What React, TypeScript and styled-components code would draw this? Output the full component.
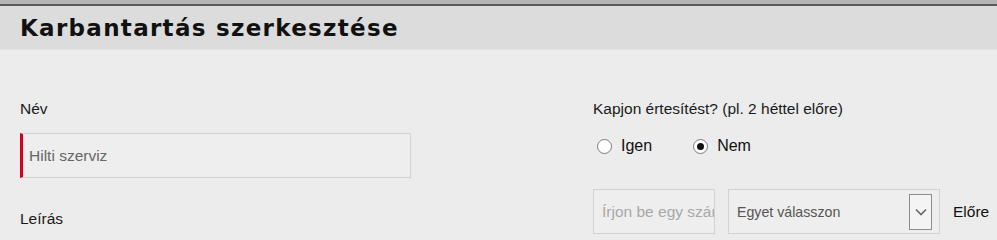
import React, { useState } from "react";
import styled, { createGlobalStyle } from "styled-components";

const fontStack = `"Liberation Sans", Arial, sans-serif`;

const GlobalStyle = createGlobalStyle`
  html, body {
    margin: 0;
    padding: 0;
    background: #ececec;
    font-family: ${fontStack};
  }
`;

const Page = styled.div`
  border-top: 4px solid #b4b4b4;
  min-height: 230px;
  background: #ececec;
`;

const Header = styled.header`
  border-top: 2px solid #5a5a5a;
  border-bottom: 1px solid #e4e4e4;
  background: #dcdcdc;
  height: 43px;
  display: flex;
  align-items: center;
  padding: 0 20px;
`;

const Title = styled.h1`
  margin: 0;
  font-family: "DejaVu Sans", ${fontStack};
  font-size: 23px;
  font-weight: 700;
  letter-spacing: 1.3px;
  color: #111;
`;

const Body = styled.div`
  display: grid;
  grid-template-columns: 553px 1fr;
  column-gap: 20px;
  padding: 50px 20px 0;
`;

const Column = styled.div`
  display: flex;
  flex-direction: column;
`;

const Label = styled.label<{ $top?: number; $gap?: number }>`
  font-size: 15.5px;
  color: #1a1a1a;
  line-height: 18px;
  margin-top: ${(p) => p.$top ?? 0}px;
  margin-bottom: ${(p) => p.$gap ?? 0}px;
`;

const TextInput = styled.input<{ $required?: boolean; $width: number }>`
  box-sizing: border-box;
  width: ${(p) => p.$width}px;
  height: 45px;
  border: 1px solid #d2d2d2;
  border-left: ${(p) => (p.$required ? "3px solid #d7001c" : "1px solid #d2d2d2")};
  background: #eeeeee;
  padding: 0 0 0 ${(p) => (p.$required ? 6 : 8)}px;
  font-family: ${fontStack};
  font-size: 15.5px;
  color: #666;
  outline: none;
  &::placeholder {
    color: #a8a8a8;
  }
`;

const RadioRow = styled.div`
  display: flex;
  gap: 41px;
  margin: 19px 0 0 4px;
`;

const RadioOption = styled.label`
  display: flex;
  align-items: center;
  gap: 9px;
  font-size: 16px;
  line-height: 18px;
  color: #111;
  cursor: pointer;
`;

const RadioDot = styled.span<{ $checked: boolean }>`
  box-sizing: border-box;
  width: 15px;
  height: 15px;
  border-radius: 50%;
  border: 1px solid #7a7a7a;
  background: #fff;
  display: flex;
  align-items: center;
  justify-content: center;
  &::after {
    content: "";
    width: 7px;
    height: 7px;
    border-radius: 50%;
    background: ${(p) => (p.$checked ? "#111" : "transparent")};
  }
`;

const InlineRow = styled.div`
  display: flex;
  align-items: center;
  gap: 13px;
  margin-top: 34px;
`;

const Select = styled.div`
  box-sizing: border-box;
  width: 212px;
  height: 45px;
  border: 1px solid #d2d2d2;
  background: #eeeeee;
  display: flex;
  align-items: center;
  justify-content: space-between;
  padding: 0 7px 0 8px;
  font-size: 14.2px;
  color: #555;
`;

const ChevronBox = styled.span`
  box-sizing: border-box;
  width: 23px;
  height: 36px;
  border: 1px solid #8c8c8c;
  background: #f4f4f4;
  display: flex;
  align-items: center;
  justify-content: center;
`;

const Suffix = styled.span`
  font-size: 15.5px;
  color: #111;
`;

const App = () => {
  const [notify, setNotify] = useState(false);

  return (
    <>
      <GlobalStyle />
      <Page>
        <Header>
          <Title>Karbantartás szerkesztése</Title>
        </Header>
        <Body>
          <Column>
            <Label $gap={15}>Név</Label>
            <TextInput $required $width={391} defaultValue="Hilti szerviz" />
            <Label $top={32}>Leírás</Label>
          </Column>
          <Column>
            <Label>Kapjon értesítést? (pl. 2 héttel előre)</Label>
            <RadioRow>
              <RadioOption onClick={() => setNotify(true)}>
                <RadioDot $checked={notify} />
                Igen
              </RadioOption>
              <RadioOption onClick={() => setNotify(false)}>
                <RadioDot $checked={!notify} />
                Nem
              </RadioOption>
            </RadioRow>
            <InlineRow>
              <TextInput $width={122} placeholder="Írjon be egy számot" />
              <Select>
                Egyet válasszon
                <ChevronBox>
                  <svg width="12" height="8" viewBox="0 0 12 8">
                    <path d="M1 1.5 L6 6.5 L11 1.5" fill="none" stroke="#666" strokeWidth="1.6" />
                  </svg>
                </ChevronBox>
              </Select>
              <Suffix>Előre</Suffix>
            </InlineRow>
          </Column>
        </Body>
      </Page>
    </>
  );
};

export default App;
